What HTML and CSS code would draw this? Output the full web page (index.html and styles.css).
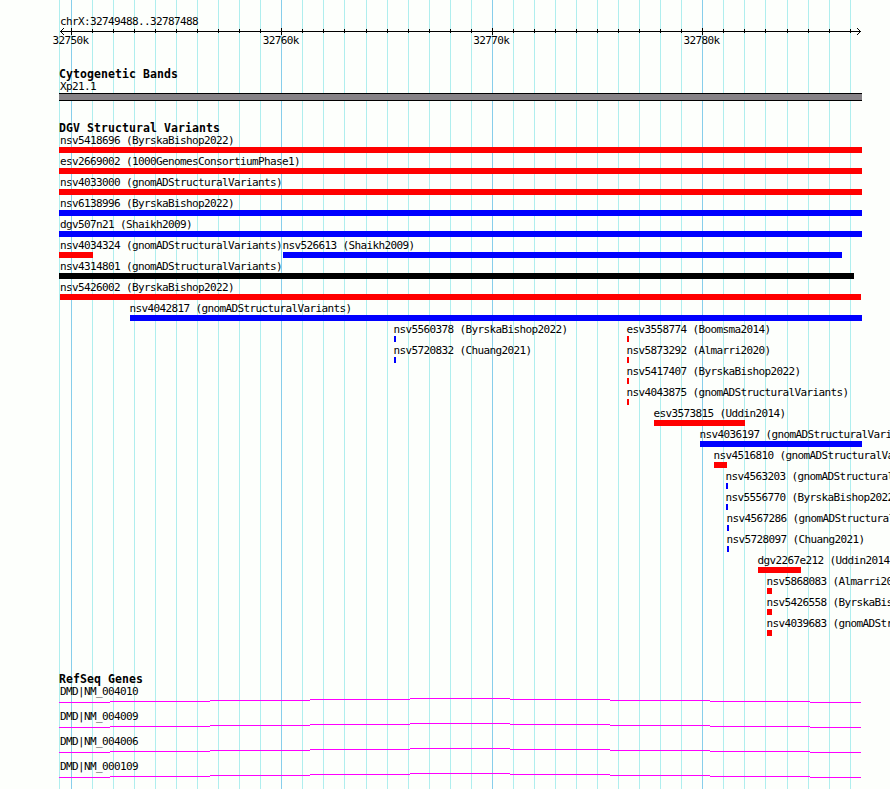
FILE: index.html
```
<!DOCTYPE html>
<html lang="en">
<head>
  <meta charset="UTF-8">
  <title>chrX:32749488..32787488</title>
  <link rel="stylesheet" href="styles.css">
</head>
<body>
  <svg class="grid" id="grid" width="890" height="789" shape-rendering="crispEdges"></svg>

  <div class="panel">
    <div class="region">chrX:32749488..32787488</div>
    <svg class="ruler" id="ruler" width="804" height="9" shape-rendering="crispEdges"></svg>
    <div class="ruler-labels">
      <span>32750k</span><span>32760k</span><span>32770k</span><span>32780k</span>
    </div>

    <h2 class="track-title cyto-title">Cytogenetic Bands</h2>
    <div class="label">Xp21.1</div>
    <div class="band"></div>

    <h2 class="track-title dgv-title">DGV Structural Variants</h2>
    <div class="variants" id="variants"></div>

    <h2 class="track-title">RefSeq Genes</h2>
    <div class="genes" id="genes"></div>
  </div>

  <script src="script.js"></script>
</body>
</html>
```
FILE: styles.css
```
body {
  margin: 0;
  height: 789px;
  overflow: hidden;
  background-color: #fdfffc;
  color: #000000;
  font-family: "DejaVu Sans Mono", monospace;
  font-size: 11px;
  letter-spacing: -0.622px;
}

.grid {
  position: absolute;
  top: 0;
  left: 0;
  z-index: -1;
}

.panel {
  height: 774px;
  padding: 15px 0 0 59px;
  overflow: hidden;
}

.region,
.label {
  height: 12px;
  line-height: 12px;
  padding-left: 1px;
  white-space: nowrap;
}

.region {
  line-height: 14px;
}

.ruler {
  display: block;
}

.ruler-labels {
  display: flex;
  gap: 174.4px;
  height: 12px;
  line-height: 12px;
  margin-left: -6.6px;
  margin-top: -1px;
}

.ruler-labels span {
  width: 36px;
}

.track-title {
  margin: 0;
  height: 13px;
  line-height: 13px;
  font-size: 11.5px;
  font-weight: bold;
  letter-spacing: 0.077px;
}

.cyto-title {
  margin-top: 21px;
}

.band {
  box-sizing: border-box;
  width: 803px;
  height: 8px;
  background-color: #868286;
  border-top: 1px solid #000000;
  border-bottom: 1px solid #000000;
}

.dgv-title {
  margin-top: 21px;
}

.variants {
  height: 538px;
}

.row {
  display: flex;
  height: 21px;
}

.feature {
  flex: none;
}

.feature .label {
  width: 0;
  padding-left: 0;
  margin-left: -0.6px;
}

.feature .label.edge {
  margin-left: 1px;
}

.feature .label.near-edge {
  margin-left: 0;
}

.bar {
  height: 6px;
}

.gain {
  background-color: #0000ff;
}

.loss {
  background-color: #ff0000;
}

.complex {
  background-color: #000000;
}

.gene {
  height: 25px;
}

.gene svg {
  display: block;
}
```
FILE: script.js
```
const LEFT = 59;

// vertical guide lines, one per kb, darker every 10 kb
const ticks = [71, 92, 113, 134, 155, 176, 197, 218, 239, 260, 281, 302, 323, 344, 366, 387, 408, 429, 450,
  471, 492, 513, 534, 555, 576, 597, 618, 639, 660, 681, 702, 723, 744, 765, 787, 808, 829, 850];

let gridLines = '<rect x="59" width="1" height="789" fill="#afeeee"/>';
let rulerLines = '<rect x="1" y="4" width="801" height="1"/>';
ticks.forEach((x, i) => {
  const major = i % 10 === 0;
  gridLines += `<rect x="${x}" width="1" height="789" fill="${major ? '#87ceeb' : '#afeeee'}"/>`;
  rulerLines += `<rect x="${x - LEFT}" y="${major ? 1 : 2}" width="1" height="${major ? 7 : 4}"/>`;
});
// arrow heads
for (let i = 1; i <= 3; i++) {
  rulerLines += `<rect x="${i + 1}" y="${4 - i}" width="1" height="1"/><rect x="${i + 1}" y="${4 + i}" width="1" height="1"/>`;
  rulerLines += `<rect x="${801 - i}" y="${4 - i}" width="1" height="1"/><rect x="${801 - i}" y="${4 + i}" width="1" height="1"/>`;
}
document.getElementById('grid').innerHTML = gridLines;
document.getElementById('ruler').innerHTML = rulerLines;

// [label, type, start px, end px]
const rows = [
  [['nsv5418696 (ByrskaBishop2022)', 'loss', 59, 862]],
  [['esv2669002 (1000GenomesConsortiumPhase1)', 'loss', 59, 862]],
  [['nsv4033000 (gnomADStructuralVariants)', 'loss', 59, 862]],
  [['nsv6138996 (ByrskaBishop2022)', 'gain', 59, 862]],
  [['dgv507n21 (Shaikh2009)', 'gain', 59, 862]],
  [['nsv4034324 (gnomADStructuralVariants)', 'loss', 59, 93], ['nsv526613 (Shaikh2009)', 'gain', 283, 842]],
  [['nsv4314801 (gnomADStructuralVariants)', 'complex', 59, 854]],
  [['nsv5426002 (ByrskaBishop2022)', 'loss', 60, 861]],
  [['nsv4042817 (gnomADStructuralVariants)', 'gain', 130, 862]],
  [['nsv5560378 (ByrskaBishop2022)', 'gain', 394, 396], ['esv3558774 (Boomsma2014)', 'loss', 627, 629]],
  [['nsv5720832 (Chuang2021)', 'gain', 394, 396], ['nsv5873292 (Almarri2020)', 'loss', 627, 629]],
  [['nsv5417407 (ByrskaBishop2022)', 'loss', 627, 629]],
  [['nsv4043875 (gnomADStructuralVariants)', 'loss', 627, 629]],
  [['esv3573815 (Uddin2014)', 'loss', 654, 745]],
  [['nsv4036197 (gnomADStructuralVariants)', 'gain', 700, 862]],
  [['nsv4516810 (gnomADStructuralVariants)', 'loss', 714, 727]],
  [['nsv4563203 (gnomADStructuralVariants)', 'gain', 726, 728]],
  [['nsv5556770 (ByrskaBishop2022)', 'gain', 726, 728]],
  [['nsv4567286 (gnomADStructuralVariants)', 'gain', 727, 729]],
  [['nsv5728097 (Chuang2021)', 'gain', 727, 729]],
  [['dgv2267e212 (Uddin2014)', 'loss', 758, 801]],
  [['nsv5868083 (Almarri2020)', 'loss', 767, 772]],
  [['nsv5426558 (ByrskaBishop2022)', 'loss', 767, 772]],
  [['nsv4039683 (gnomADStructuralVariants)', 'loss', 767, 772]]
];

document.getElementById('variants').innerHTML = rows.map(row => {
  let pos = LEFT;
  const features = row.map(([label, type, start, end]) => {
    const gap = start - pos;
    pos = end;
    const edge = start === LEFT ? ' edge' : start === LEFT + 1 ? ' near-edge' : '';
    return `<div class="feature" style="margin-left: ${gap}px; width: ${end - start}px">
      <div class="label${edge}">${label}</div><div class="bar ${type}"></div></div>`;
  });
  return `<div class="row">${features.join('')}</div>`;
}).join('');

// intron line rises one pixel per step to the middle and falls back
const steps = [[0, 51, 4], [51, 151, 3], [151, 251, 2], [251, 351, 1], [351, 451, 0],
  [451, 551, 1], [551, 651, 2], [651, 751, 3], [751, 802, 4]];
const intron = steps.map(([a, b, y]) => `<rect x="${a}" y="${y}" width="${b - a}" height="1" fill="#ff00ff"/>`).join('');

document.getElementById('genes').innerHTML = ['NM_004010', 'NM_004009', 'NM_004006', 'NM_000109'].map(id =>
  `<div class="gene"><div class="label">DMD|${id}</div>
    <svg width="803" height="6" shape-rendering="crispEdges">${intron}</svg></div>`).join('');
```
